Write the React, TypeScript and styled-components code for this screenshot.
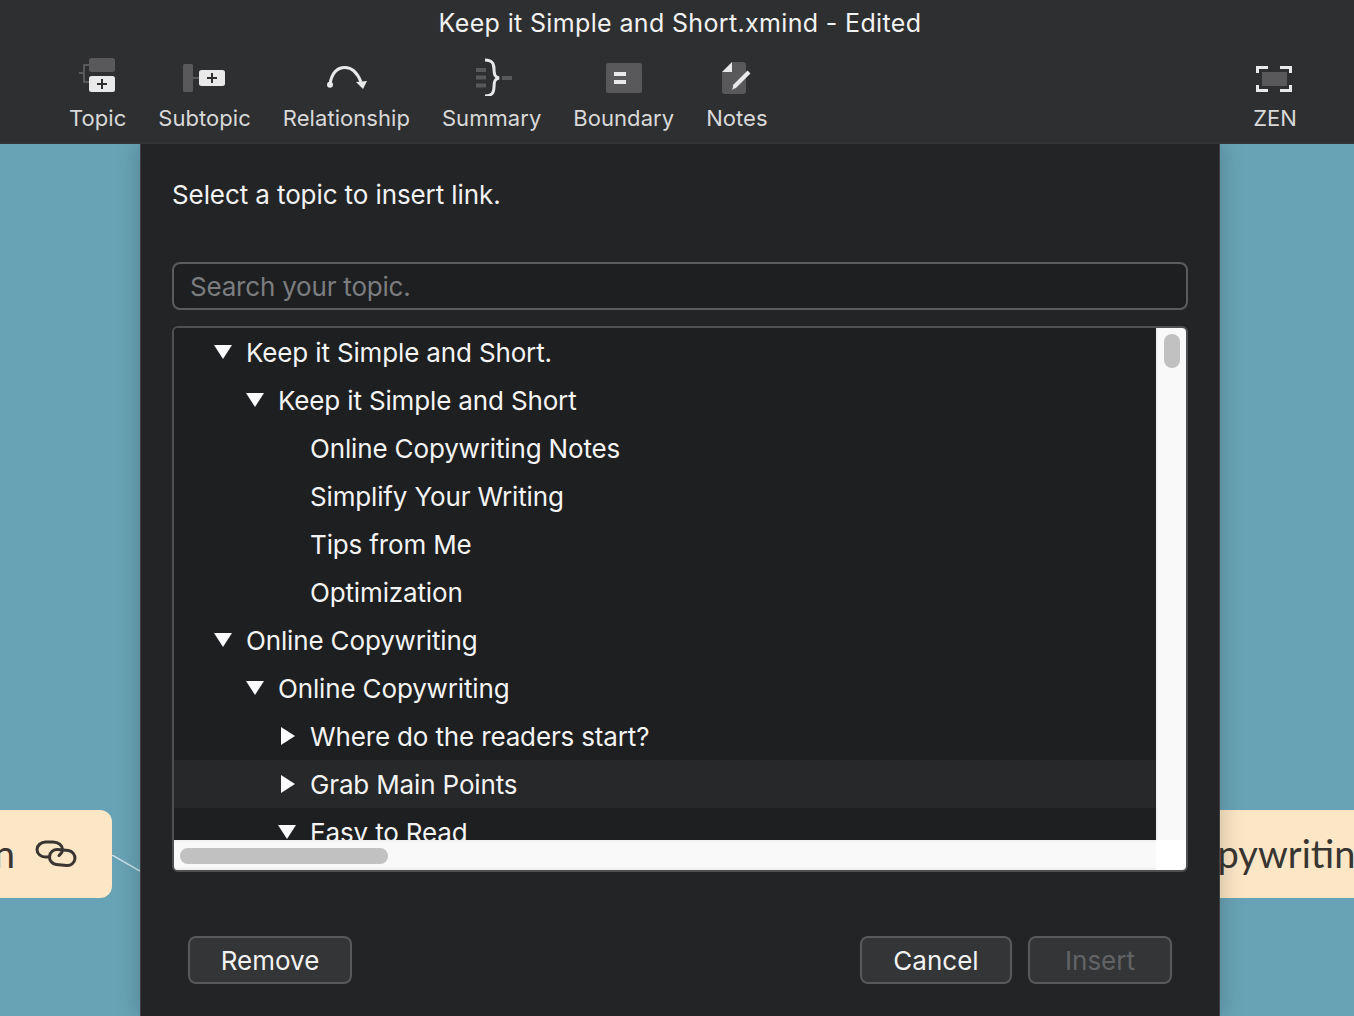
import React from "react";
import styled, { createGlobalStyle } from "styled-components";

const Global = createGlobalStyle`
  html, body { margin: 0; padding: 0; background: #68a3b5; }
  body { font-family: Inter, "Liberation Sans", sans-serif; }
`;

const Page = styled.div`
  width: 1354px;
  height: 1016px;
  display: flex;
  flex-direction: column;
  overflow: hidden;
`;

const Header = styled.header`
  height: 144px;
  box-sizing: border-box;
  flex: none;
  background: #2e2f31;
  border-bottom: 2px solid #343537;
  display: flex;
  flex-direction: column;
  position: relative;
  z-index: 3;
`;

const Title = styled.div`
  height: 46px;
  padding-left: 6px;
  display: flex;
  align-items: center;
  justify-content: center;
  color: #f2f2f2;
  font-size: 25px;
  letter-spacing: 0.35px;
`;

const Toolbar = styled.div`
  display: flex;
  justify-content: space-between;
  padding: 0 57px 0 69px;
`;

const ToolGroup = styled.div`
  display: flex;
  gap: 32px;
`;

const Tool = styled.div`
  display: flex;
  flex-direction: column;
  align-items: center;
  padding-top: 10px;
  color: #d9d9d9;
  font-size: 22px;
  letter-spacing: 0.05px;
  line-height: 44px;
  white-space: nowrap;
`;

const ToolIcon = styled.svg`
  width: 48px;
  height: 40px;
  margin: 0 -10px;
  flex: none;
  display: block;
`;

const Canvas = styled.main`
  flex: 1;
  position: relative;
  display: flex;
  justify-content: center;
  padding-left: 6px;
  min-height: 0;
`;

const Node = styled.div<{ $side: "left" | "right" }>`
  position: absolute;
  top: 666px;
  height: 88px;
  padding-bottom: 3px;
  background: #fbe6c5;
  display: flex;
  align-items: center;
  color: #383533;
  font-family: Lato, "Open Sans", sans-serif;
  font-size: 38px;
  white-space: nowrap;
  box-sizing: border-box;
  ${(p) =>
    p.$side === "left"
      ? `right: 1242px; width: 200px; border-radius: 12px; justify-content: flex-end; padding-right: 35px; gap: 20px;`
      : `left: 1100px; width: 300px; padding-left: 71px;`}
`;

const Link = styled.svg`
  position: absolute;
  left: 112px;
  top: 711px;
  width: 28px;
  height: 17px;
`;

const Dialog = styled.section`
  width: 1080px;
  box-sizing: border-box;
  background: #232426;
  padding: 32px 31px 0;
  display: flex;
  flex-direction: column;
  position: relative;
  z-index: 2;
  border-left: 1px solid #3d3e40;
  border-right: 1px solid #3d3e40;
  box-shadow: 0 0 24px rgba(0, 0, 0, 0.22);
`;

const Prompt = styled.div`
  height: 38px;
  line-height: 38px;
  color: #f2f2f2;
  font-size: 26px;
  letter-spacing: -0.1px;
  margin-bottom: 48px;
`;

const Search = styled.div`
  height: 48px;
  box-sizing: border-box;
  border: 2px solid #5b5c5e;
  border-radius: 8px;
  background: #1e1f21;
  color: #7c7d7f;
  font-size: 26px;
  letter-spacing: -0.2px;
  line-height: 46px;
  padding-left: 16px;
  margin-bottom: 16px;
`;

const ListBox = styled.div`
  height: 546px;
  box-sizing: border-box;
  border: 2px solid #4f5052;
  border-radius: 6px;
  display: grid;
  grid-template-columns: 1fr 30px;
  grid-template-rows: 1fr 30px;
  overflow: hidden;
  margin-bottom: 64px;
`;

const Tree = styled.div`
  background: #1e1f21;
  overflow: hidden;
  min-height: 0;
`;

const Row = styled.div<{ $depth: number; $hover?: boolean }>`
  height: 48px;
  display: flex;
  align-items: center;
  padding-left: ${(p) => 40 + p.$depth * 32}px;
  background: ${(p) => (p.$hover ? "#27282a" : "transparent")};
  color: #f4f4f4;
  font-size: 26px;
  letter-spacing: -0.15px;
`;

const Arrow = styled.span<{ $dir?: "down" | "right" }>`
  width: 18px;
  height: 18px;
  margin-right: 14px;
  flex: none;
  display: flex;
  align-items: center;
  justify-content: center;
  &::before {
    content: "";
    display: ${(p) => (p.$dir ? "block" : "none")};
    width: 0;
    height: 0;
    ${(p) =>
      p.$dir === "down"
        ? `border-left: 9px solid transparent; border-right: 9px solid transparent; border-top: 14px solid #fbfbff;`
        : `border-top: 9px solid transparent; border-bottom: 9px solid transparent; border-left: 14px solid #fbfbff; margin-left: 2px;`}
  }
`;

const VTrack = styled.div`
  background: #f9f9f9;
  box-shadow: inset 2px 0 0 #f1f1f1;
  padding: 6px 6px 0 8px;
`;

const HTrack = styled.div`
  background: #f9f9f9;
  box-shadow: inset 0 2px 0 #f1f1f1;
  border-bottom: 2px solid #efefef;
  padding: 8px 0 0 6px;
`;

const Corner = styled.div`
  background: #fff;
`;

const Thumb = styled.div<{ $w: number; $h: number }>`
  width: ${(p) => p.$w}px;
  height: ${(p) => p.$h}px;
  border-radius: 8px;
  background: #c1c1c1;
`;

const Footer = styled.div`
  display: flex;
  align-items: center;
  padding: 0 16px;
  gap: 16px;
`;

const Button = styled.div<{ $w: number; $off?: boolean }>`
  width: ${(p) => p.$w}px;
  height: 48px;
  box-sizing: border-box;
  border: 2px solid #58595b;
  border-radius: 8px;
  background: #343537;
  color: ${(p) => (p.$off ? "#626365" : "#f2f2f2")};
  font-size: 26px;
  display: flex;
  align-items: center;
  justify-content: center;
`;

const Spacer = styled.div`
  flex: 1;
`;

const rows: { d: number; a?: "down" | "right"; t: string; h?: boolean }[] = [
  { d: 0, a: "down", t: "Keep it Simple and Short." },
  { d: 1, a: "down", t: "Keep it Simple and Short" },
  { d: 2, t: "Online Copywriting Notes" },
  { d: 2, t: "Simplify Your Writing" },
  { d: 2, t: "Tips from Me" },
  { d: 2, t: "Optimization" },
  { d: 0, a: "down", t: "Online Copywriting" },
  { d: 1, a: "down", t: "Online Copywriting" },
  { d: 2, a: "right", t: "Where do the readers start?" },
  { d: 2, a: "right", t: "Grab Main Points", h: true },
  { d: 2, a: "down", t: "Easy to Read" },
];

const GREY = "#59595b";
const LIGHT = "#e9e9e9";

const Plus = ({ x, y }: { x: number; y: number }) => (
  <path d={`M${x - 5} ${y}h10M${x} ${y - 5}v10`} stroke="#2e2f31" strokeWidth="2" fill="none" />
);

const TopicIcon = () => (
  <ToolIcon viewBox="0 0 48 40">
    <rect x="15" y="2" width="26" height="14" rx="2.5" fill={GREY} />
    <path d="M5 17h5M15 9h-5v17h5" stroke={GREY} strokeWidth="2" fill="none" />
    <rect x="15" y="20" width="26" height="16" rx="2.5" fill={LIGHT} />
    <Plus x={28} y={28} />
  </ToolIcon>
);

const SubtopicIcon = () => (
  <ToolIcon viewBox="0 0 48 40">
    <rect x="2" y="8" width="10" height="28" rx="1.5" fill={GREY} />
    <path d="M12 22h6" stroke={GREY} strokeWidth="2" />
    <rect x="18" y="14" width="26" height="16" rx="2.5" fill={LIGHT} />
    <Plus x={31} y={22} />
  </ToolIcon>
);

const RelationshipIcon = () => (
  <ToolIcon viewBox="0 0 48 40">
    <circle cx="8" cy="28.7" r="3" fill={LIGHT} />
    <path d="M8 28C10 16 16 11.5 23 11.5C30 11.5 35 16 39 26" stroke={LIGHT} strokeWidth="3" fill="none" />
    <path d="M34 26L45 25L41 33Z" fill={LIGHT} />
  </ToolIcon>
);

const SummaryIcon = () => (
  <ToolIcon viewBox="0 0 48 40">
    <path d="M8 14h10M8 21.5h10M8 29.5h10M34 22h10" stroke={GREY} strokeWidth="4" fill="none" />
    <path
      d="M17 4C24 4 26 7 26 13C26 19 27 21 31 22C27 23 26 25 26 31C26 37 24 40 17 40"
      stroke={LIGHT}
      strokeWidth="3"
      fill="none"
    />
  </ToolIcon>
);

const BoundaryIcon = () => (
  <ToolIcon viewBox="0 0 48 40">
    <rect x="6" y="7" width="36" height="30" rx="2" fill={GREY} />
    <path d="M14 18h12M14 26h12" stroke={LIGHT} strokeWidth="4" />
  </ToolIcon>
);

const NotesIcon = () => (
  <ToolIcon viewBox="0 0 48 40">
    <path d="M19 6H30Q33 6 33 9V35Q33 38 30 38H12Q9 38 9 35V16H19Z" fill={GREY} />
    <path d="M9 16L19 6V16Z" fill={LIGHT} />
    <path d="M21 31L36 16" stroke={LIGHT} strokeWidth="4" fill="none" />
    <path d="M23 31.5L19 34L20.5 29.5Z" fill={LIGHT} />
  </ToolIcon>
);

const ZenIcon = () => (
  <ToolIcon viewBox="0 0 48 40">
    <rect x="11" y="16" width="25" height="14" fill={GREY} />
    <path
      d="M6.5 17V11.5H17M29 11.5H39.5V17M39.5 29V34.5H29M17 34.5H6.5V29"
      stroke={LIGHT}
      strokeWidth="3"
      fill="none"
    />
  </ToolIcon>
);

const NodeLink = styled.svg`
  width: 42px;
  height: 30px;
  flex: none;
  margin-top: 3px;
`;

export default function App() {
  return (
    <Page>
      <Global />
      <Header>
        <Title>Keep it Simple and Short.xmind - Edited</Title>
        <Toolbar>
          <ToolGroup>
            <Tool><TopicIcon />Topic</Tool>
            <Tool><SubtopicIcon />Subtopic</Tool>
            <Tool><RelationshipIcon />Relationship</Tool>
            <Tool><SummaryIcon />Summary</Tool>
            <Tool><BoundaryIcon />Boundary</Tool>
            <Tool><NotesIcon />Notes</Tool>
          </ToolGroup>
          <Tool><ZenIcon />ZEN</Tool>
        </Toolbar>
      </Header>
      <Canvas>
        <Node $side="left">
          n
          <NodeLink viewBox="0 0 42 30" fill="none" stroke="#383533" strokeWidth="3" strokeLinecap="round">
            <path d="M13 18H10.500C5.500 18 2 14.500 2 10.500C2 6.500 6 3 10.500 3H18C24 3 27.500 7 27.500 10.500C27.500 13 26 15 24 16.500" />
            <rect x="14.500" y="11" width="25.500" height="15" rx="7.500" transform="rotate(6 27 18.500)" />
          </NodeLink>
        </Node>
        <Link viewBox="0 0 28 17"><path d="M0 0L28 16" stroke="#cfe3ea" strokeWidth="1.500" /></Link>
        <Node $side="right">Copywriting</Node>
        <Dialog>
          <Prompt>Select a topic to insert link.</Prompt>
          <Search>Search your topic.</Search>
          <ListBox>
            <Tree>
              {rows.map((r, i) => (
                <Row key={i} $depth={r.d} $hover={r.h}>
                  <Arrow $dir={r.a} />
                  {r.t}
                </Row>
              ))}
            </Tree>
            <VTrack><Thumb $w={16} $h={34} /></VTrack>
            <HTrack><Thumb $w={208} $h={16} /></HTrack>
            <Corner />
          </ListBox>
          <Footer>
            <Button $w={164}>Remove</Button>
            <Spacer />
            <Button $w={152}>Cancel</Button>
            <Button $w={144} $off>Insert</Button>
          </Footer>
        </Dialog>
      </Canvas>
    </Page>
  );
}
